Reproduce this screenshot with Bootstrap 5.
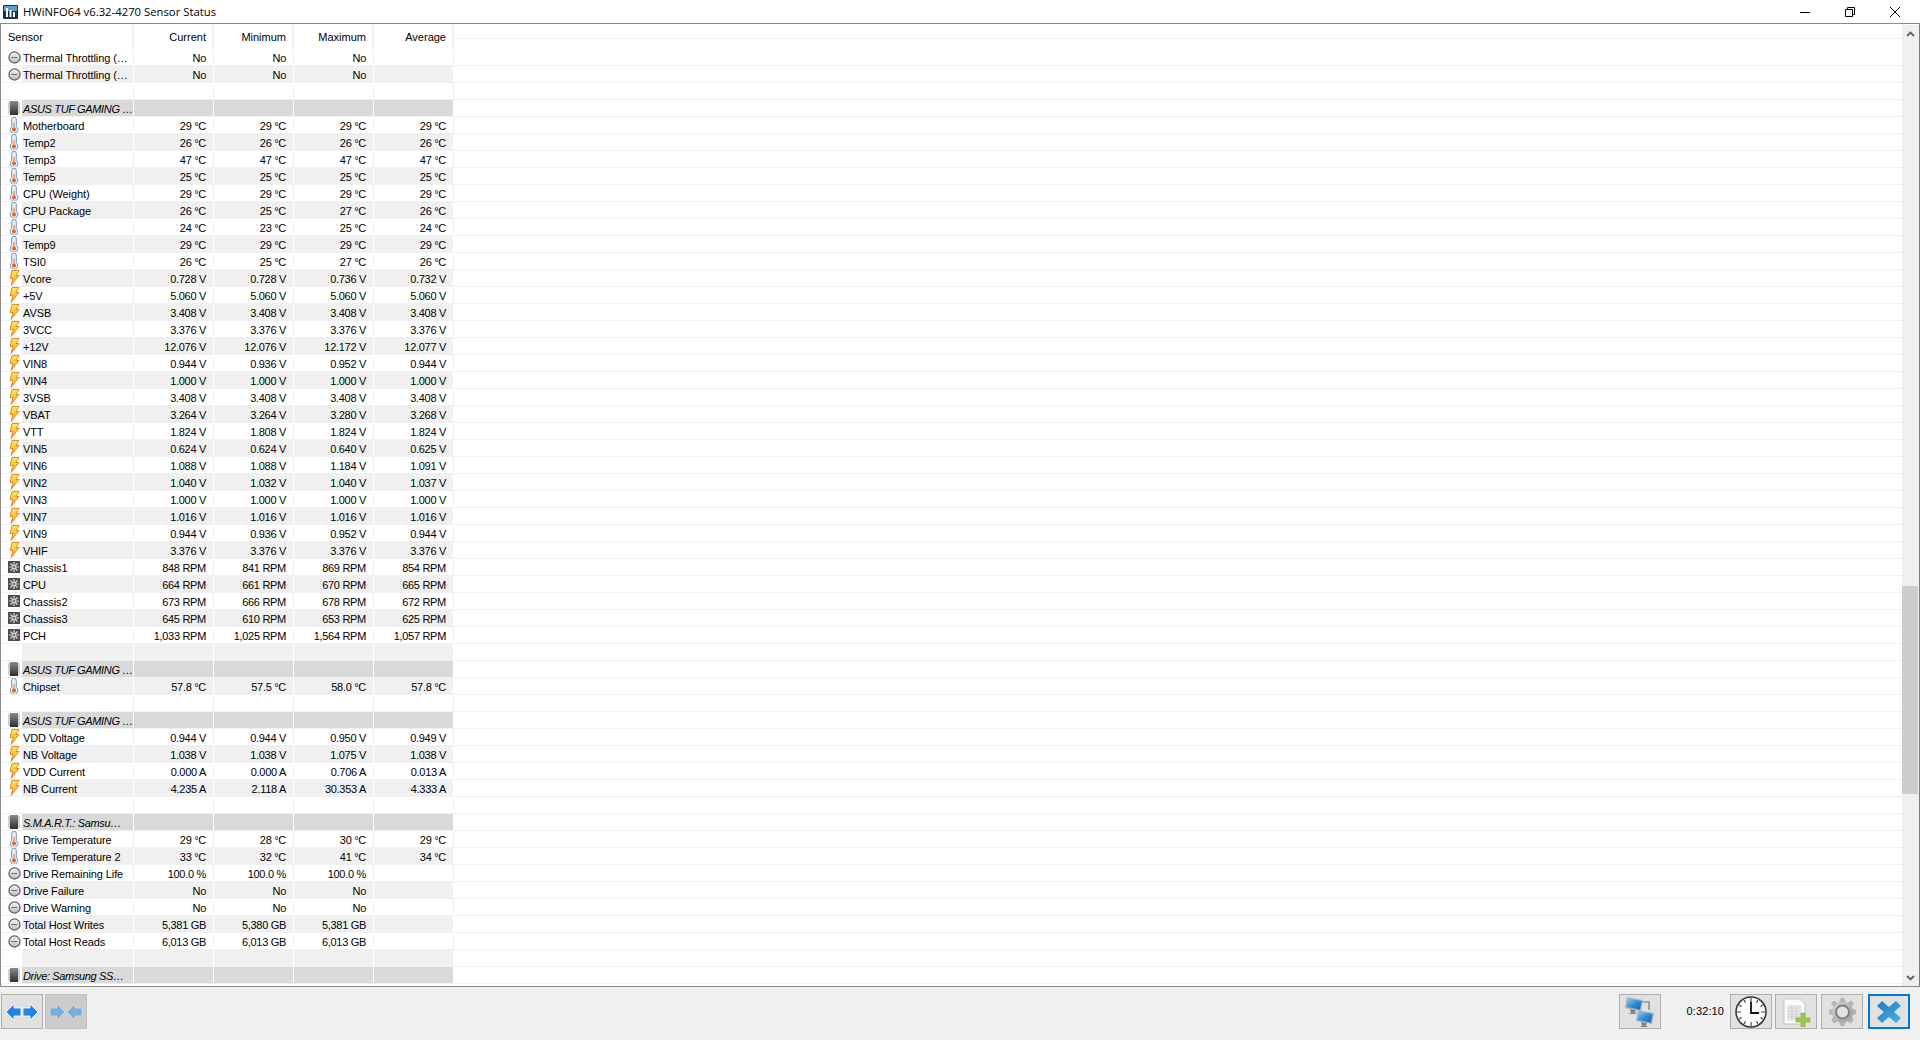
<!DOCTYPE html>
<html lang="en">
<head>
    <meta charset="UTF-8">
    <meta name="viewport" content="width=device-width, initial-scale=1.0">
    <title>HWiNFO64 v6.32-4270 Sensor Status</title>
    <link href="https://cdn.jsdelivr.net/npm/bootstrap@5.3.0/dist/css/bootstrap.min.css" rel="stylesheet">
    <style>
        html, body { height: 100%; overflow: hidden; }
        body {
            background: #f0f0f0;
            font-family: "Liberation Sans", Arial, sans-serif;
            font-size: 11px;
            color: #000;
        }
        .app-window { height: 1040px; width: 1920px; }
        .title-bar { height: 23px; background: #fff; font-family: "Open Sans", sans-serif; font-size: 11.3px; }
        .title-text { margin-left: 5px; line-height: 23px; }
        .app-logo { margin-left: 3px; }
        .win-btn { width: 45px; height: 23px; }
        .win-group { margin-right: 3px; }
        .list-frame {
            height: 964px;
            background: #fff;
            border: 1px solid #8a8a8a;
            border-right-color: #7a7a8a;
        }
        .list-area {
            flex: 1 1 auto;
            min-width: 0;
            overflow: hidden;
            padding-top: 1px;
            background-image: repeating-linear-gradient(to bottom, transparent 0, transparent 16px, #f0f0f0 16px, #f0f0f0 17px);
            background-position: 0 25px;
        }
        .sensor-table { table-layout: fixed; width: 452px; border-collapse: separate; border-spacing: 0; margin-left: 1px; }
        .sensor-table th, .sensor-table td {
            width: 80px;
            height: 17px;
            font-weight: 400;
            text-align: right;
            white-space: nowrap;
            overflow: hidden;
            border-right: 1px solid #f0f0f0;
            border-bottom: 1px solid #f0f0f0;
        }
        .sensor-table td { padding: 2px 7px 0 0; line-height: 14px; letter-spacing: -.3px; }
        .sensor-table thead th { height: 24px; padding: 0 6px 0 0; background: #fff; border-right: 2px solid #f0f0f0; border-bottom: 0; line-height: 22px; }
        .sensor-table thead th:first-child { text-align: left; padding-left: 6px; }
        .sensor-table th:first-child, .sensor-table td:first-child { width: 132px; }
        .sensor-table td:first-child { text-align: left; padding: 0; letter-spacing: -.1px; }
        .name-cell { height: 16px; }
        .row-icon { width: 20px; height: 16px; flex: none; display: flex; align-items: center; justify-content: center; padding-left: 4px; background: #fff; }
        .row-name { padding: 2px 0 0 1px; line-height: 14px; }
        .row-alt td { background: #f0f0f0; border-right-color: #fff; }
        .row-group td { background: #d9d9d9; border-right-color: #fff; }
        .row-group .row-name { font-style: italic; letter-spacing: -.35px; }
        .scroll-track { width: 17px; background: #f0f0f0; margin-top: 1px; }
        .scroll-arrow { height: 17px; }
        .scroll-space { flex: 1 1 auto; padding-top: 544px; }
        .scroll-thumb { height: 208px; background: #cdcdcd; width: 16px; }
        .foot-bar { flex: 1 1 auto; padding: 7px 10px 0 1px; }
        .tool-btn {
            width: 42px;
            height: 35px;
            background: #e1e1e1;
            border: 1px solid #adadad;
            padding: 0;
            display: flex;
            align-items: center;
            justify-content: center;
        }
        .tool-btn.off { background: #cccccc; border-color: #bfbfbf; margin-left: 2px; }
        .tool-btn.active { border: 2px solid #0078d7; margin-left: 5px; }
        .tool-doc { margin-left: 3px; }
        .tool-gear { margin-left: 4px; }
        .time-text { width: 69px; padding-right: 6px; text-align: right; line-height: 35px; font-size: 11px; letter-spacing: .1px; }
    </style>
</head>
<body>
    <svg width="0" height="0" class="position-absolute">
        <defs>
            <linearGradient id="boltFill" x1="0" y1="0" x2="0" y2="1">
                <stop offset="0" stop-color="#ffe95a"/><stop offset="1" stop-color="#f6a313"/>
            </linearGradient>
            <linearGradient id="chipFill" x1="0" y1="0" x2="0" y2="1">
                <stop offset="0" stop-color="#8a8a8a"/><stop offset="1" stop-color="#2e2e2e"/>
            </linearGradient>
            <linearGradient id="xFill" x1="0" y1="0" x2="1" y2="1">
                <stop offset="0" stop-color="#1c79bd"/><stop offset="1" stop-color="#4cb3e6"/>
            </linearGradient>
            <linearGradient id="screenFill" x1="0" y1="0" x2="1" y2="1">
                <stop offset="0" stop-color="#8fd0f5"/><stop offset=".5" stop-color="#2f8fdc"/><stop offset="1" stop-color="#0d5fb0"/>
            </linearGradient>
            <linearGradient id="gearFill" x1="0" y1="0" x2="1" y2="1">
                <stop offset="0" stop-color="#d4d4d4"/><stop offset="1" stop-color="#9c9c9c"/>
            </linearGradient>
            <linearGradient id="clockFill" x1="0" y1="0" x2="0" y2="1">
                <stop offset="0" stop-color="#f4f4f4"/><stop offset="1" stop-color="#bdbdbd"/>
            </linearGradient>
            <symbol id="ic-clock" viewBox="0 0 14 14">
                <circle cx="7" cy="7" r="6" fill="url(#clockFill)" stroke="#5c5c5c" stroke-width="1.300"/>
                <path d="M3.500 7H10" stroke="#666" stroke-width="1"/>
            </symbol>
            <symbol id="ic-temp" viewBox="0 0 10 16">
                <path d="M2.700 2.500a2.300 2.300 0 0 1 4.600 0v7a3.800 3.800 0 1 1-4.600 0z" fill="#e6eff9" stroke="#6f94c0" stroke-width="1"/>
                <path d="M4.500 6h1v5h-1z" fill="#e8702a"/>
                <circle cx="5" cy="12.500" r="2" fill="#e8601c"/>
            </symbol>
            <symbol id="ic-volt" viewBox="0 0 12 16">
                <path d="M4 .5h7L8 5.500h3L3 15.500 5 8.500H2z" fill="url(#boltFill)" stroke="#d9741a" stroke-width=".8"/>
            </symbol>
            <symbol id="ic-fan" viewBox="0 0 12 12">
                <rect width="12" height="12" fill="#4e4e4e"/>
                <path d="M6 1v10M1 6h10M2.500 2.500l7 7M9.500 2.500l-7 7" stroke="#dcdcdc" stroke-width="1.200"/>
                <circle cx="6" cy="6" r="1.200" fill="#777"/>
            </symbol>
            <symbol id="ic-chip" viewBox="0 0 12 14">
                <path d="M0 2h12M0 4h12M0 6h12M0 8h12M0 10h12M0 12h12" stroke="#a0a0a0" stroke-width="1"/>
                <rect x="2" y="0" width="8" height="14" fill="url(#chipFill)"/>
            </symbol>
        </defs>
    </svg>

    <div class="app-window d-flex flex-column">
        <div class="title-bar d-flex align-items-center flex-shrink-0">
            <svg class="app-logo" width="15" height="14" viewBox="0 0 15 14">
                <rect width="15" height="14" rx="1" fill="#16324f"/>
                <rect x="1" y="1" width="13" height="5" fill="#5f9fcb"/>
                <path d="M3 3h2v9H3zM6.500 5h2v7h-2zM10 7h2v5h-2z" fill="#fff"/>
            </svg>
            <span class="title-text flex-grow-1">HWiNFO64 v6.32-4270 Sensor Status</span>
            <div class="d-flex win-group">
                <div class="win-btn d-flex align-items-center justify-content-center">
                    <svg width="10" height="10" viewBox="0 0 10 10"><path d="M0 5.500h10" stroke="#000"/></svg>
                </div>
                <div class="win-btn d-flex align-items-center justify-content-center">
                    <svg width="10" height="10" viewBox="0 0 10 10" fill="none"><path d="M.5 2.500h7v7h-7zM2.500 2.500v-2h7v7h-2" stroke="#000"/></svg>
                </div>
                <div class="win-btn d-flex align-items-center justify-content-center">
                    <svg width="10" height="10" viewBox="0 0 10 10"><path d="M0 0l10 10M10 0 0 10" stroke="#000"/></svg>
                </div>
            </div>
        </div>

        <div class="list-frame d-flex flex-shrink-0">
            <div class="list-area">
                <table class="sensor-table">
                    <thead>
                        <tr><th>Sensor</th><th>Current</th><th>Minimum</th><th>Maximum</th><th>Average</th></tr>
                    </thead>
                    <tbody id="sensorRows"></tbody>
                </table>
            </div>
            <div class="scroll-track d-flex flex-column align-items-start flex-shrink-0">
                <div class="scroll-arrow d-flex align-items-center justify-content-center w-100">
                    <svg width="9" height="6" viewBox="0 0 9 6"><path d="M1 5l3.500-3.500L8 5" fill="none" stroke="#606060" stroke-width="1.800"/></svg>
                </div>
                <div class="scroll-space"><div class="scroll-thumb"></div></div>
                <div class="scroll-arrow d-flex align-items-center justify-content-center w-100">
                    <svg width="9" height="6" viewBox="0 0 9 6"><path d="M1 1l3.500 3.500L8 1" fill="none" stroke="#606060" stroke-width="1.800"/></svg>
                </div>
            </div>
        </div>

        <div class="foot-bar d-flex">
            <button class="tool-btn" type="button" aria-label="Expand">
                <svg width="34" height="20" viewBox="0 0 34 20"><path d="M1 10l8-8v4h7v8H9v4zM33 10l-8-8v4h-7v8h7v4z" fill="#1f86e6" stroke="#fff" stroke-width=".8"/></svg>
            </button>
            <button class="tool-btn off" type="button" aria-label="Collapse">
                <svg width="34" height="20" viewBox="0 0 34 20"><path d="M16 10L8 2v4H1v8h7v4zM18 10l8-8v4h7v8h-7v4z" fill="#79aedb" stroke="#d8d8d8" stroke-width=".8"/></svg>
            </button>
            <div class="flex-grow-1"></div>
            <button class="tool-btn" type="button" aria-label="Network">
                <svg width="32" height="32" viewBox="0 0 32 32">
                    <path d="M14 6h11v8" fill="none" stroke="#777" stroke-width="1.200"/>
                    <path d="M3 1l16 3-2 11L1 12z" fill="#aab0b6"/>
                    <path d="M4 2.500l13.500 2.500-1.500 8.500L2.500 11z" fill="url(#screenFill)"/>
                    <path d="M6 13l6 1-1 3 3 1H4l3-1z" fill="#7f868c"/>
                    <path d="M14 14l16 3-2 11-16-3z" fill="#aab0b6"/>
                    <path d="M15 15.500l13.500 2.500-1.500 8.500L13.500 24z" fill="url(#screenFill)"/>
                    <path d="M17 26l6 1-1 3 3 1H15l3-1z" fill="#7f868c"/>
                </svg>
            </button>
            <div class="time-text">0:32:10</div>
            <button class="tool-btn" type="button" aria-label="Timer">
                <svg width="32" height="32" viewBox="0 0 32 32">
                    <circle cx="16" cy="16" r="15" fill="#fff" stroke="#333" stroke-width="1.500"/>
                    <path d="M16 2v4M16 26v4M2 16h4M26 16h4M9 4l1.500 2.600M23 4l-1.500 2.600M9 28l1.500-2.600M23 28l-1.500-2.600M4 9l2.600 1.500M28 9l-2.600 1.500M4 23l2.600-1.500M28 23l-2.600-1.500" stroke="#444" stroke-width="1.200"/>
                    <path d="M16 6v11h8" fill="none" stroke="#111" stroke-width="1.800"/>
                </svg>
            </button>
            <button class="tool-btn tool-doc" type="button" aria-label="Log">
                <svg width="30" height="30" viewBox="0 0 30 30">
                    <path d="M3 2h16l5 5v20H3z" fill="#fbfbfb" stroke="#c4c4c4"/>
                    <path d="M6 8h14v16H6z" fill="#e8e8e8"/>
                    <path d="M6 11h14M6 14h14M6 17h14M6 20h14M11 8v16M15 8v16" stroke="#c8c8c8" stroke-width=".7"/>
                    <path d="M20 16h4v5h5v4h-5v5h-4v-5h-5v-4h5z" fill="#9ccb4a" stroke="#7aa93a" stroke-width=".6"/>
                </svg>
            </button>
            <button class="tool-btn tool-gear" type="button" aria-label="Settings">
                <svg width="33" height="32" viewBox="0 0 33 32">
                    <path d="M16.500 4v24M5 16h23M8 7.500l17 17M25 7.500l-17 17" stroke="url(#gearFill)" stroke-width="6"/>
                    <path d="M16.500 2v28M3 16h27M6.500 6l20 20M26.500 6l-20 20" stroke="#b5b5b5" stroke-width="4.500" stroke-dasharray="4.500 19 4.500"/>
                    <circle cx="16.500" cy="16" r="10.500" fill="url(#gearFill)"/>
                    <circle cx="16.500" cy="16" r="6.500" fill="#e1e1e1" stroke="#7f7f7f" stroke-width="2"/>
                </svg>
            </button>
            <button class="tool-btn active" type="button" aria-label="Close">
                <svg width="26" height="24" viewBox="0 0 26 24"><path d="M6 1l7 6 7-6 5 5-7 6 7 6-5 5-7-6-7 6-5-5 7-6-7-6z" fill="url(#xFill)"/></svg>
            </button>
        </div>
    </div>

    <script>
        const B = 'ic-clock', T = 'ic-temp', V = 'ic-volt', F = 'ic-fan', G = 'ic-chip';
        const rows = [
            [B, 'Thermal Throttling (…', 'No', 'No', 'No', ''],
            [B, 'Thermal Throttling (…', 'No', 'No', 'No', ''],
            [],
            [G, 'ASUS TUF GAMING …'],
            [T, 'Motherboard', '29 °C', '29 °C', '29 °C', '29 °C'],
            [T, 'Temp2', '26 °C', '26 °C', '26 °C', '26 °C'],
            [T, 'Temp3', '47 °C', '47 °C', '47 °C', '47 °C'],
            [T, 'Temp5', '25 °C', '25 °C', '25 °C', '25 °C'],
            [T, 'CPU (Weight)', '29 °C', '29 °C', '29 °C', '29 °C'],
            [T, 'CPU Package', '26 °C', '25 °C', '27 °C', '26 °C'],
            [T, 'CPU', '24 °C', '23 °C', '25 °C', '24 °C'],
            [T, 'Temp9', '29 °C', '29 °C', '29 °C', '29 °C'],
            [T, 'TSI0', '26 °C', '25 °C', '27 °C', '26 °C'],
            [V, 'Vcore', '0.728 V', '0.728 V', '0.736 V', '0.732 V'],
            [V, '+5V', '5.060 V', '5.060 V', '5.060 V', '5.060 V'],
            [V, 'AVSB', '3.408 V', '3.408 V', '3.408 V', '3.408 V'],
            [V, '3VCC', '3.376 V', '3.376 V', '3.376 V', '3.376 V'],
            [V, '+12V', '12.076 V', '12.076 V', '12.172 V', '12.077 V'],
            [V, 'VIN8', '0.944 V', '0.936 V', '0.952 V', '0.944 V'],
            [V, 'VIN4', '1.000 V', '1.000 V', '1.000 V', '1.000 V'],
            [V, '3VSB', '3.408 V', '3.408 V', '3.408 V', '3.408 V'],
            [V, 'VBAT', '3.264 V', '3.264 V', '3.280 V', '3.268 V'],
            [V, 'VTT', '1.824 V', '1.808 V', '1.824 V', '1.824 V'],
            [V, 'VIN5', '0.624 V', '0.624 V', '0.640 V', '0.625 V'],
            [V, 'VIN6', '1.088 V', '1.088 V', '1.184 V', '1.091 V'],
            [V, 'VIN2', '1.040 V', '1.032 V', '1.040 V', '1.037 V'],
            [V, 'VIN3', '1.000 V', '1.000 V', '1.000 V', '1.000 V'],
            [V, 'VIN7', '1.016 V', '1.016 V', '1.016 V', '1.016 V'],
            [V, 'VIN9', '0.944 V', '0.936 V', '0.952 V', '0.944 V'],
            [V, 'VHIF', '3.376 V', '3.376 V', '3.376 V', '3.376 V'],
            [F, 'Chassis1', '848 RPM', '841 RPM', '869 RPM', '854 RPM'],
            [F, 'CPU', '664 RPM', '661 RPM', '670 RPM', '665 RPM'],
            [F, 'Chassis2', '673 RPM', '666 RPM', '678 RPM', '672 RPM'],
            [F, 'Chassis3', '645 RPM', '610 RPM', '653 RPM', '625 RPM'],
            [F, 'PCH', '1,033 RPM', '1,025 RPM', '1,564 RPM', '1,057 RPM'],
            [],
            [G, 'ASUS TUF GAMING …'],
            [T, 'Chipset', '57.8 °C', '57.5 °C', '58.0 °C', '57.8 °C'],
            [],
            [G, 'ASUS TUF GAMING …'],
            [V, 'VDD Voltage', '0.944 V', '0.944 V', '0.950 V', '0.949 V'],
            [V, 'NB Voltage', '1.038 V', '1.038 V', '1.075 V', '1.038 V'],
            [V, 'VDD Current', '0.000 A', '0.000 A', '0.706 A', '0.013 A'],
            [V, 'NB Current', '4.235 A', '2.118 A', '30.353 A', '4.333 A'],
            [],
            [G, 'S.M.A.R.T.: Samsu…'],
            [T, 'Drive Temperature', '29 °C', '28 °C', '30 °C', '29 °C'],
            [T, 'Drive Temperature 2', '33 °C', '32 °C', '41 °C', '34 °C'],
            [B, 'Drive Remaining Life', '100.0 %', '100.0 %', '100.0 %', ''],
            [B, 'Drive Failure', 'No', 'No', 'No', ''],
            [B, 'Drive Warning', 'No', 'No', 'No', ''],
            [B, 'Total Host Writes', '5,381 GB', '5,380 GB', '5,381 GB', ''],
            [B, 'Total Host Reads', '6,013 GB', '6,013 GB', '6,013 GB', ''],
            [],
            [G, 'Drive: Samsung SS…']
        ];
        const sizes = { 'ic-clock': [13, 13], 'ic-temp': [10, 16], 'ic-volt': [12, 16], 'ic-fan': [12, 12], 'ic-chip': [12, 14] };

        function makeRow(row, i) {
            const [icon, name, ...vals] = row;
            const cls = icon === G ? 'row-group' : (i % 2 ? 'row-alt' : '');
            const iconHtml = icon
                ? `<svg width="${sizes[icon][0]}" height="${sizes[icon][1]}"><use href="#${icon}"/></svg>`
                : '';
            const cells = [0, 1, 2, 3].map(k => `<td>${vals[k] || ''}</td>`).join('');
            return `<tr class="${cls}"><td><div class="name-cell d-flex"><span class="row-icon">${iconHtml}</span><span class="row-name">${name || ''}</span></div></td>${cells}</tr>`;
        }

        document.getElementById('sensorRows').innerHTML = rows.map(makeRow).join('');
    </script>
    <script src="https://cdn.jsdelivr.net/npm/bootstrap@5.3.0/dist/js/bootstrap.bundle.min.js"></script>
</body>
</html>
